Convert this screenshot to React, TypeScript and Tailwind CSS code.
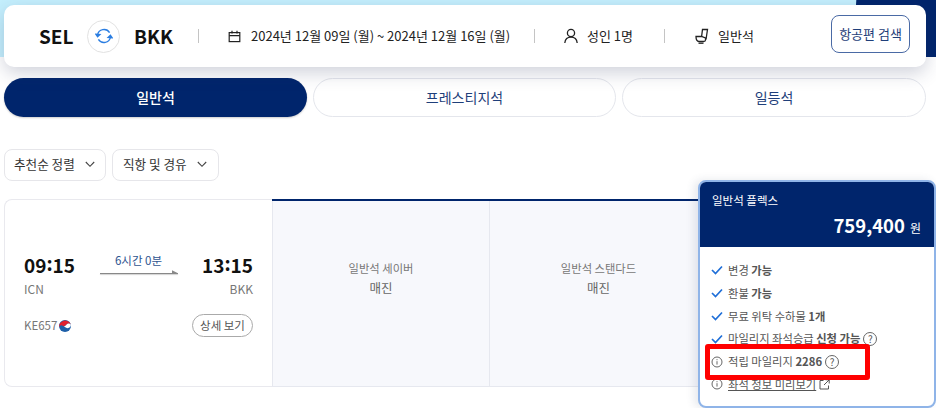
import React from "react";

const Divider = () => <div className="w-px h-[14px] bg-[#c4c4c4] shrink-0" />;

const Chevron = () => (
  <svg width="10" height="7" viewBox="0 0 10 7" fill="none" stroke="#444" strokeWidth="1.1">
    <path d="M.8 1 5 5.300 9.200 1" />
  </svg>
);

const Check = () => (
  <svg width="12" height="10" viewBox="0 0 12 10" fill="none" stroke="#1f6fd8" strokeWidth="1.7" className="shrink-0">
    <path d="M1 5l3.500 3.500L11 1.500" />
  </svg>
);

const Info = () => (
  <svg width="12" height="12" viewBox="0 0 12 12" fill="none" stroke="#666" strokeWidth="1" className="shrink-0">
    <circle cx="6" cy="6" r="5" />
    <path d="M6 5.200v3.400" />
    <path d="M6 3.200v1" />
  </svg>
);

const Help = () => (
  <span className="shrink-0 w-[14px] h-[14px] rounded-full border border-[#666] flex items-center justify-center text-[10px] leading-none text-[#555]">
    ?
  </span>
);

const Row = ({ icon, children }: { icon: React.ReactNode; children: React.ReactNode }) => (
  <div className="flex items-center h-[22.8px]">
    <div className="w-[17px] flex items-center">{icon}</div>
    <div className="flex items-center gap-[3px] text-[11.3px] text-[#555] whitespace-nowrap">{children}</div>
  </div>
);

const SoldOut = ({ name, width }: { name: string; width: string }) => (
  <div className={`${width} h-full border-r border-[#e6e8ef] flex flex-col items-center pt-[59px] shrink-0`}>
    <div className="text-[11.3px] leading-[17px] text-[#777]">{name}</div>
    <div className="text-[12.5px] leading-[19px] mt-[1px] text-[#666]">매진</div>
  </div>
);

const Time = ({ h, m }: { h: string; m: string }) => (
  <span className="text-[19px] leading-[36px] font-bold text-[#111]">
    {h}
    <span className="relative -top-[2px]">:</span>
    {m}
  </span>
);

export default function App() {
  return (
    <div
      className="relative w-[936px] h-[408px] overflow-hidden bg-white"
      style={{ fontFamily: '"Noto Sans CJK KR", "Noto Sans", sans-serif' }}
    >
      <div className="h-[57px] bg-[#c4effd] flex justify-end">
        <div className="w-[83px] h-full bg-[#00256c] [clip-path:polygon(4%_0,100%_0,100%_100%,0_100%)]" />
      </div>

      <div className="relative -mt-[52px] ml-1 w-[922px] h-[62px] rounded-[10px] bg-white shadow-[0_6px_18px_rgba(40,50,90,0.22)] flex items-center pl-[35px] text-[13px] text-[#222]">
        <span className="text-[19px] font-bold text-[#111] w-[48px] shrink-0">SEL</span>
        <div className="w-[33px] h-[33px] shrink-0 rounded-full border border-[#e2e2e2] flex items-center justify-center">
          <svg width="18" height="18" viewBox="0 0 18 18" fill="none" stroke="#2a7de1" strokeWidth="1.4">
            <path d="M2.500 8A6.600 6.600 0 0 1 14.600 5.600" />
            <path d="M15.500 10A6.600 6.600 0 0 1 3.400 12.400" />
            <path d="M.8 7.200 2.600 9.600 4.800 7.600Z" fill="#2a7de1" />
            <path d="M17.200 10.800 15.400 8.400 13.200 10.400Z" fill="#2a7de1" />
          </svg>
        </div>
        <span className="text-[19px] font-bold text-[#111] ml-[14px] w-[64px] shrink-0">BKK</span>
        <Divider />
        <svg className="ml-[29px] shrink-0" width="13" height="13" viewBox="0 0 13 13" fill="none" stroke="#222" strokeWidth="1.2">
          <rect x="1.200" y="2.600" width="10.600" height="9" />
          <path d="M1.200 5.600h10.600M4 .8v2.600M9 .8v2.600" />
        </svg>
        <span className="ml-[10px] w-[283px] shrink-0 whitespace-nowrap">2024년 12월 09일 (월) ~ 2024년 12월 16일 (월)</span>
        <Divider />
        <svg className="ml-[28px] shrink-0" width="16" height="16" viewBox="0 0 16 16" fill="none" stroke="#222" strokeWidth="1.3">
          <circle cx="8" cy="5" r="3.600" />
          <path d="M1.800 15c.4-3.800 2.800-5.800 6.200-5.800s5.800 2 6.200 5.800" />
        </svg>
        <span className="ml-[8px] w-[77px] shrink-0 whitespace-nowrap">성인 1명</span>
        <Divider />
        <svg className="ml-[30px] shrink-0" width="15" height="16" viewBox="0 0 15 16" fill="none" stroke="#222" strokeWidth="1.300">
          <path d="M6.600 8.500 7.500 1.500h5L11 11.500" />
          <path d="M1 8.500h5.500l4 1.500v2c0 1-1 1.500-2 1.500H4C2 13.500 1 11.500 1 8.500Z" />
          <path d="M3.500 15.200h5" />
        </svg>
        <span className="ml-[8px] w-[113px] shrink-0 whitespace-nowrap">일반석</span>
        <button className="w-[79px] h-[38px] shrink-0 rounded-[8px] border border-[#4a6aa5] text-[13px] text-[#1f3f7a] -mt-[4px] whitespace-nowrap">
          항공편 검색
        </button>
      </div>

      <div className="mt-[11px] ml-1 w-[922px] flex gap-[6px] text-[14px]">
        <div className="w-[303px] h-[39px] rounded-full bg-[#00256c] text-white font-medium flex items-center justify-center shadow-[0_1px_2px_rgba(0,0,0,0.2)]">
          일반석
        </div>
        <div className="w-[303px] h-[39px] rounded-full border border-[#e4e6ec] text-[#1f3f7a] flex items-center justify-center">
          프레스티지석
        </div>
        <div className="w-[304px] h-[39px] rounded-full border border-[#e4e6ec] text-[#1f3f7a] flex items-center justify-center">
          일등석
        </div>
      </div>

      <div className="mt-[32px] ml-1 flex gap-[6px] text-[12.6px] text-[#333]">
        <div className="w-[102px] h-[32px] rounded-[8px] border border-[#e6e6ea] flex items-center gap-[10px] pl-[9px] pb-px">
          추천순 정렬 <Chevron />
        </div>
        <div className="w-[107px] h-[32px] rounded-[8px] border border-[#e6e6ea] flex items-center gap-[10px] pl-[10px] pb-px whitespace-nowrap">
          직항 및 경유 <Chevron />
        </div>
      </div>

      <div className="mt-[18px] ml-1 flex items-start">
        <div className="w-[268px] h-[188px] shrink-0 rounded-l-[8px] border border-r-0 border-[#e9e9ee] pl-[19px] pr-[19px] pt-[47px]">
          <div className="flex items-start justify-between">
            <Time h="09" m="15" />
            <div className="w-[78px] mt-[5px] flex flex-col items-center">
              <span className="text-[11.5px] leading-[16px] text-[#2f5590]">6시간 0분</span>
              <div className="relative mt-[5px] w-full h-px bg-[#888] shadow-[0_1px_1px_rgba(0,0,0,0.2)]">
                <div className="absolute right-0 -top-[3px] w-[6px] h-[3px] bg-[#888] [clip-path:polygon(0_0,100%_100%,0_100%)]" />
              </div>
            </div>
            <Time h="13" m="15" />
          </div>
          <div className="flex justify-between text-[12px] leading-[16px] text-[#777] -mt-[2px]">
            <span>ICN</span>
            <span>BKK</span>
          </div>
          <div className="flex items-center justify-between mt-[17px]">
            <div className="flex items-center gap-[2px] text-[11.5px] text-[#777]">
              KE657
              <svg width="12" height="12" viewBox="0 0 12 12">
                <circle cx="6" cy="6" r="6" fill="#1d5fa8" />
                <path d="M.2 7.300A6 6 0 0 1 11.800 4.500C10.800 3.300 8.800 3.100 7.600 4.400 6.300 5.900 4.500 6.300 3 5.500 1.800 5 .7 5.800.2 7.300Z" fill="#e0202f" />
                <path d="M11.800 4.500C12.200 6 11 7.800 9.300 8.100 7.800 8.400 6.400 7.400 4.700 6.300 6 6.200 6.800 5.300 7.600 4.400 8.800 3.100 10.800 3.300 11.800 4.500Z" fill="#fff" />
              </svg>
            </div>
            <button className="w-[61px] h-[23px] rounded-full border border-[#aaa] text-[11.5px] text-[#555] whitespace-nowrap">
              상세 보기
            </button>
          </div>
        </div>

        <div className="h-[188px] flex border-t-2 border-[#00256c] bg-[#f7f8fc] w-[436px] shrink-0 relative">
          <div className="absolute inset-x-0 bottom-0 h-px bg-[#e6e8ef]" />
          <SoldOut name="일반석 세이버" width="w-[218px] border-l border-l-[#e6e8ef]" />
          <SoldOut name="일반석 스탠다드" width="w-[218px]" />
        </div>
        <div className="w-[228px] h-[188px] shrink-0 border-b border-[#e6e8ef]" />
      </div>

      {/* floating selected fare card over the grid */}
      <div className="absolute left-[698px] top-[180px] w-[238px] h-[228px] rounded-[8px] border-2 border-[#8fb4e8] bg-white overflow-hidden shadow-[-4px_0_8px_rgba(60,70,110,0.12)]">
        <div className="h-[65px] bg-[#00256c] text-white pl-[12px] pr-[13px] pt-[10px]">
          <div className="text-[11.5px] leading-[17px]">일반석 플렉스</div>
          <div className="flex items-baseline justify-end mt-[2px]">
            <span className="text-[18.5px] leading-[28px] font-bold">759,400</span>
            <span className="text-[12px] ml-[5px]">원</span>
          </div>
        </div>
        <div className="pl-[11px] pt-[12px]">
          <Row icon={<Check />}>
            <span>변경 <b className="font-bold">가능</b></span>
          </Row>
          <Row icon={<Check />}>
            <span>환불 <b className="font-bold">가능</b></span>
          </Row>
          <Row icon={<Check />}>
            <span>무료 위탁 수하물 <b className="font-bold">1개</b></span>
          </Row>
          <Row icon={<Check />}>
            <span>마일리지 좌석승급 <b className="font-bold">신청 가능</b></span>
            <Help />
          </Row>
          <Row icon={<Info />}>
            <span>적립 마일리지 <b className="font-bold">2286</b></span>
            <Help />
          </Row>
          <Row icon={<Info />}>
            <span className="underline">좌석 정보 미리보기</span>
            <svg width="11" height="11" viewBox="0 0 11 11" fill="none" stroke="#555" strokeWidth="1">
              <path d="M4.500 1.500H1v8.500h8.500V6.500" />
              <path d="M5 6l5-5M6.500 .8H10.200V4.500" />
            </svg>
          </Row>
        </div>
      </div>

      {/* red annotation drawn over the screenshot */}
      <div className="absolute left-[705px] top-[344px] w-[165px] h-[36px] border-[5px] border-[#ff0000] rounded-[3px]" />
    </div>
  );
}
